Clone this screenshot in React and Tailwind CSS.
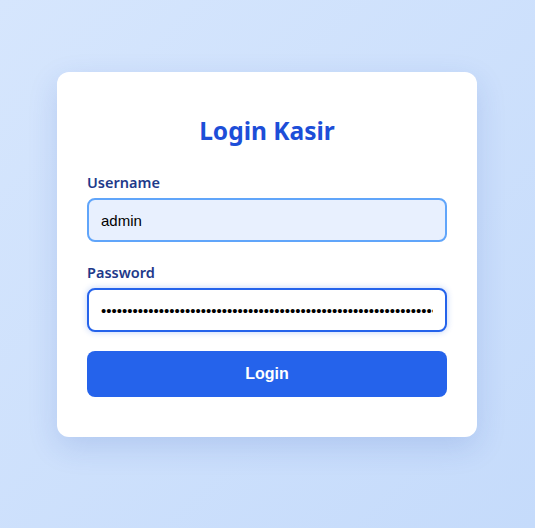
import React from "react";

export default function App() {
  return (
    <div className="min-h-screen w-full bg-gradient-to-br from-[#d6e6fd] to-[#c5dbfb] flex justify-center items-start pt-[72px] pr-px">
      <div className="w-[420px] bg-white rounded-xl shadow-[0_10px_30px_rgba(30,64,175,0.15)] px-[30px] pt-[40px] pb-[40px] flex flex-col">
        <h2 className="text-center text-[24.5px] leading-[38px] font-bold text-[#1d4ed8] mb-[21px] font-['Noto_Sans','Open_Sans',sans-serif]">
          Login Kasir
        </h2>
        <label className="text-[14.5px] leading-[22px] font-semibold text-[#1e3a8a] mb-[5px] font-['Noto_Sans','Open_Sans',sans-serif]">
          Username
        </label>
        <input
          type="text"
          defaultValue="admin"
          className="h-[44px] w-full rounded-lg border-2 border-[#60a5fa] bg-[#e8f0fe] px-3 text-[15px] text-black outline-none mb-[19px] font-['Liberation_Sans',Arial,sans-serif]"
        />
        <label className="text-[14.5px] leading-[22px] font-semibold text-[#1e3a8a] mb-[5px] font-['Noto_Sans','Open_Sans',sans-serif]">
          Password
        </label>
        <input
          type="password"
          defaultValue="kasirpasswordkasirpasswordkasirpasswordkasirpasswordkasirpassword"
          className="h-[44px] w-full rounded-lg border-2 border-[#2563eb] bg-white px-3 text-[15px] text-black outline-none shadow-[0_0_6px_rgba(37,99,235,0.3)] mb-[19px] font-['Liberation_Sans',Arial,sans-serif]"
        />
        <button className="h-[46px] w-full rounded-lg bg-[#2563eb] text-white text-[16px] font-bold font-['Liberation_Sans',Arial,sans-serif]">
          Login
        </button>
      </div>
    </div>
  );
}
